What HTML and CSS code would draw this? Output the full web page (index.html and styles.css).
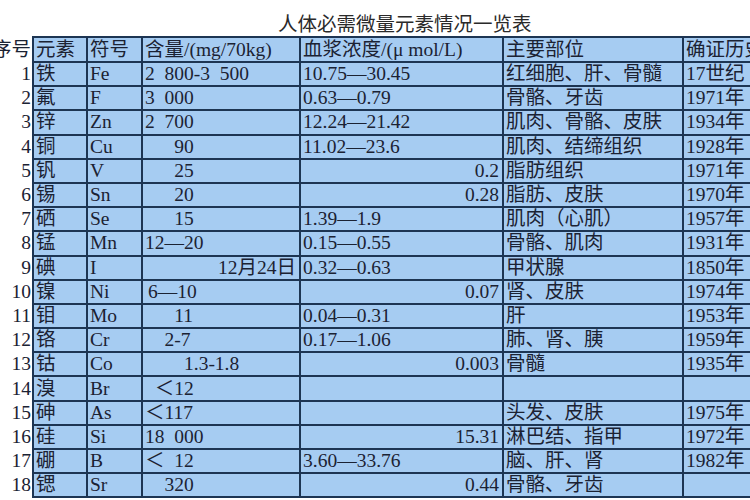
FILE: index.html
```html
<!DOCTYPE html>
<html lang="zh">
<head>
<meta charset="utf-8">
<title>人体必需微量元素情况一览表</title>
<link rel="stylesheet" href="styles.css">
</head>
<body>
<div class="page">
  <div class="title">人体必需微量元素情况一览表</div>
  <table class="sheet">
    <colgroup>
      <col class="c-no"><col class="c-el"><col class="c-sym"><col class="c-amt"><col class="c-pl"><col class="c-site"><col class="c-yr">
    </colgroup>
    <tr class="head">
      <td class="no"><span class="nobox">序号</span></td><td>元素</td><td>符号</td><td>含量/(mg/70kg)</td><td>血浆浓度/(μ mol/L)</td><td>主要部位</td><td>确证历史</td>
    </tr>
    <tr><td class="no"><span class="nobox">1</span></td><td>铁</td><td>Fe</td><td>2&ensp;800-3&ensp;500</td><td>10.75—30.45</td><td>红细胞、肝、骨髓</td><td>17世纪</td></tr>
    <tr><td class="no"><span class="nobox">2</span></td><td>氟</td><td>F</td><td>3&ensp;000</td><td>0.63—0.79</td><td>骨骼、牙齿</td><td>1971年</td></tr>
    <tr><td class="no"><span class="nobox">3</span></td><td>锌</td><td>Zn</td><td>2&ensp;700</td><td>12.24—21.42</td><td>肌肉、骨骼、皮肤</td><td>1934年</td></tr>
    <tr><td class="no"><span class="nobox">4</span></td><td>铜</td><td>Cu</td><td class="i3">90</td><td>11.02—23.6</td><td>肌肉、结缔组织</td><td>1928年</td></tr>
    <tr><td class="no"><span class="nobox">5</span></td><td>钒</td><td>V</td><td class="i3">25</td><td class="r">0.2</td><td>脂肪组织</td><td>1971年</td></tr>
    <tr><td class="no"><span class="nobox">6</span></td><td>锡</td><td>Sn</td><td class="i3">20</td><td class="r">0.28</td><td>脂肪、皮肤</td><td>1970年</td></tr>
    <tr><td class="no"><span class="nobox">7</span></td><td>硒</td><td>Se</td><td class="i3">15</td><td>1.39—1.9</td><td>肌肉（心肌）</td><td>1957年</td></tr>
    <tr><td class="no"><span class="nobox">8</span></td><td>锰</td><td>Mn</td><td>12—20</td><td>0.15—0.55</td><td>骨骼、肌肉</td><td>1931年</td></tr>
    <tr><td class="no"><span class="nobox">9</span></td><td>碘</td><td>I</td><td class="r">12月24日</td><td>0.32—0.63</td><td>甲状腺</td><td>1850年</td></tr>
    <tr><td class="no"><span class="nobox">10</span></td><td>镍</td><td>Ni</td><td class="i0">6—10</td><td class="r">0.07</td><td>肾、皮肤</td><td>1974年</td></tr>
    <tr><td class="no"><span class="nobox">11</span></td><td>钼</td><td>Mo</td><td class="i3">11</td><td>0.04—0.31</td><td>肝</td><td>1953年</td></tr>
    <tr><td class="no"><span class="nobox">12</span></td><td>铬</td><td>Cr</td><td class="i2">2-7</td><td>0.17—1.06</td><td>肺、肾、胰</td><td>1959年</td></tr>
    <tr><td class="no"><span class="nobox">13</span></td><td>钴</td><td>Co</td><td class="i4">1.3-1.8</td><td class="r">0.003</td><td>骨髓</td><td>1935年</td></tr>
    <tr><td class="no"><span class="nobox">14</span></td><td>溴</td><td>Br</td><td class="i1">＜12</td><td></td><td></td><td></td></tr>
    <tr><td class="no"><span class="nobox">15</span></td><td>砷</td><td>As</td><td>＜117</td><td></td><td>头发、皮肤</td><td>1975年</td></tr>
    <tr><td class="no"><span class="nobox">16</span></td><td>硅</td><td>Si</td><td>18&ensp;000</td><td class="r">15.31</td><td>淋巴结、指甲</td><td>1972年</td></tr>
    <tr><td class="no"><span class="nobox">17</span></td><td>硼</td><td>B</td><td>＜&ensp;12</td><td>3.60—33.76</td><td>脑、肝、肾</td><td>1982年</td></tr>
    <tr><td class="no"><span class="nobox">18</span></td><td>锶</td><td>Sr</td><td class="i2">320</td><td class="r">0.44</td><td>骨骼、牙齿</td><td></td></tr>
  </table>
</div>
</body>
</html>
```

FILE: styles.css
```css
html, body {
  margin: 0;
  padding: 0;
  background: #ffffff;
  overflow: hidden;
}
.page {
  width: 750px;
  height: 500px;
  overflow: hidden;
  font-family: "Liberation Serif", "Noto Sans CJK SC", serif;
  font-size: 19.5px;
  color: #1b2233;
}
.title {
  height: 36px;
  line-height: 50px;
  padding-left: 278px;
  color: #2a2a2a;
  white-space: nowrap;
}
.sheet {
  border-collapse: collapse;
  table-layout: fixed;
  width: 810px;
}
.c-no { width: 33px; }
.c-el { width: 54px; }
.c-sym { width: 55px; }
.c-amt { width: 158px; }
.c-pl { width: 203px; }
.c-site { width: 180px; }
.c-yr { width: 127px; }
.sheet td {
  background: #a6ccf2;
  border: 2px solid #1d3553;
  padding: 0 3px 0 2px;
  height: 22.2px;
  line-height: 20px;
  white-space: nowrap;
  overflow: visible;
  vertical-align: middle;
  text-align: left;
}
.sheet .head td {
  height: 23px;
}
.sheet td.no {
  background: #ffffff;
  border: none;
  padding: 0 1px 0 0;
}
.nobox {
  display: flex;
  justify-content: flex-end;
}
.sheet td.r { text-align: right; }
.sheet td.i0 { padding-left: 5px; }
.sheet td.i1 { padding-left: calc(2px + 0.5em); }
.sheet td.i2 { padding-left: calc(2px + 1em); }
.sheet td.i3 { padding-left: calc(2px + 1.5em); }
.sheet td.i4 { padding-left: calc(2px + 2em); }
```
